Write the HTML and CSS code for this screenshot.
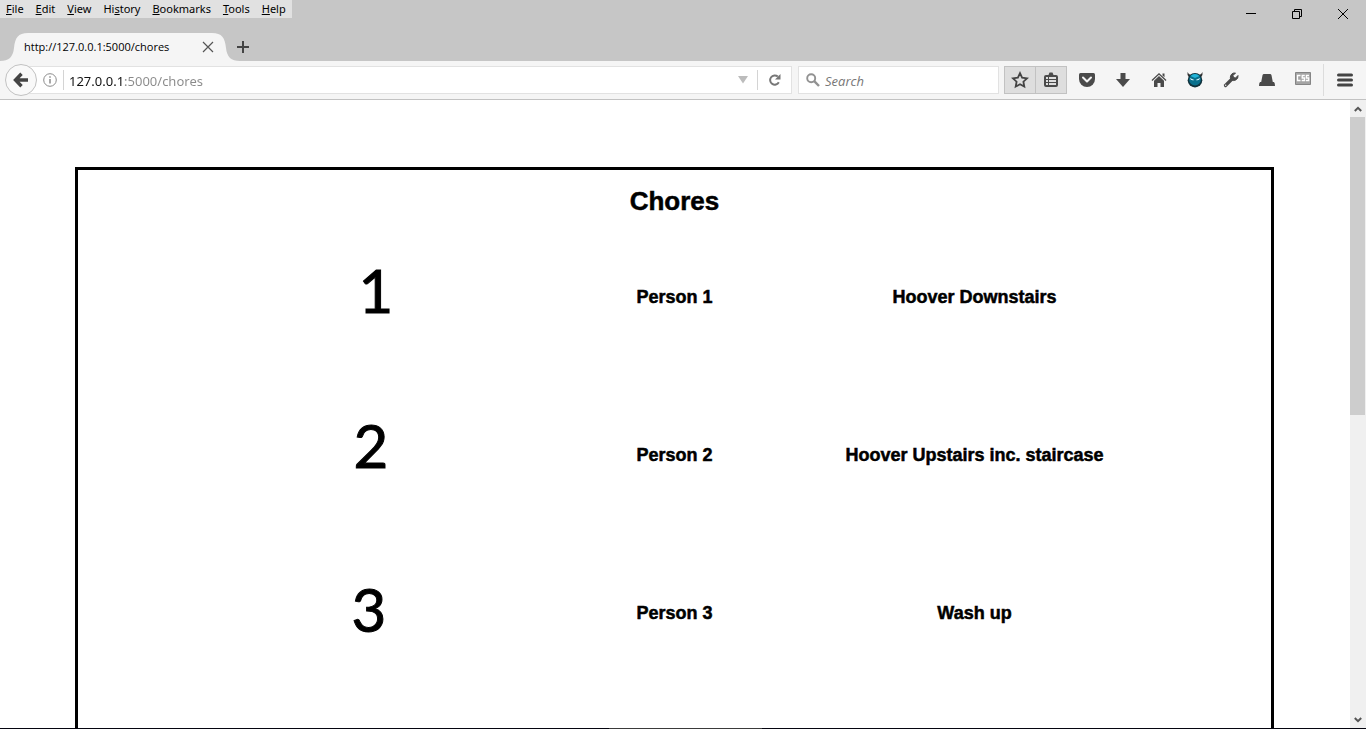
FILE: index.html
```html
<!DOCTYPE html>
<html lang="en">
<head>
<meta charset="utf-8">
<title>Chores</title>
<link rel="stylesheet" href="styles.css">
</head>
<body>
<div class="window">
  <header class="titlebar">
    <div class="top">
      <nav class="menubar" aria-label="Menu">
        <button><u>F</u>ile</button><button><u>E</u>dit</button><button><u>V</u>iew</button><button>Hi<u>s</u>tory</button><button><u>B</u>ookmarks</button><button><u>T</u>ools</button><button><u>H</u>elp</button>
      </nav>
      <div class="controls">
        <button aria-label="Minimize"><svg width="12" height="12" viewBox="0 0 12 12"><path d="M1 5.5h10" class="line"/></svg></button>
        <button aria-label="Restore"><svg width="12" height="12" viewBox="0 0 12 12"><path d="M1.500 3.500h7v7h-7zM3.500 3.500v-2h7v7h-2" class="line"/></svg></button>
        <button aria-label="Close"><svg width="12" height="12" viewBox="0 0 12 12"><path d="M1 1l10 10M11 1L1 11" class="line"/></svg></button>
      </div>
    </div>
    <div class="tabs">
      <div class="tab">
        <svg class="tab-shape" viewBox="0 0 240 28" preserveAspectRatio="none"><path d="M0 28C9 28 13 24 14 15C15 5 18 0 28 0H212C222 0 225 5 226 15C227 24 231 28 240 28Z" fill="#f5f5f5"/></svg>
        <span class="tab-title">http://127.0.0.1:5000/chores</span>
        <button class="tab-close" aria-label="Close tab"><svg width="12" height="12" viewBox="0 0 12 12"><path d="M1 1l10 10M11 1L1 11" stroke="#555" stroke-width="1.2"/></svg></button>
      </div>
      <button class="new-tab" aria-label="New tab"><svg width="12" height="12" viewBox="0 0 12 12"><path d="M6 0v12M0 6h12" stroke="#444" stroke-width="2"/></svg></button>
    </div>
  </header>

  <div class="toolbar">
    <button class="back" aria-label="Back"><svg width="16" height="16" viewBox="0 0 16 16"><path d="M8.500 1.800L2.500 8l6 6.200M3 8h12" fill="none" stroke="#444" stroke-width="3.400"/></svg></button>
    <div class="urlbox">
      <svg width="14" height="14" viewBox="0 0 14 14"><circle cx="7" cy="7" r="6.300" fill="none" stroke="#8c8c8c"/><path d="M7 6v4.500M7 3.200v1.600" stroke="#8c8c8c" stroke-width="1.500"/></svg>
      <span class="rule"></span>
      <input class="url" type="text" aria-label="Address" value="127.0.0.1:5000/chores">
      <button class="drop" aria-label="Show history"><svg width="10" height="8" viewBox="0 0 10 8"><path d="M0 0h10L5 7.500z" fill="#bcbcbc"/></svg></button>
      <span class="rule"></span>
      <button class="reload" aria-label="Reload"><svg width="14" height="14" viewBox="0 0 14 14"><path d="M10.800 9.200A4.600 4.600 0 1 1 9.800 3.600" fill="none" stroke="#777" stroke-width="2"/><path d="M12.500 1v5.500H7z" fill="#777"/></svg></button>
    </div>
    <label class="searchbox">
      <svg width="14" height="14" viewBox="0 0 14 14"><circle cx="5.200" cy="5.200" r="4" fill="none" stroke="#929292" stroke-width="1.900"/><path d="M8.200 8.200l4.800 4.800" stroke="#929292" stroke-width="2.400"/></svg>
      <input type="text" placeholder="Search" aria-label="Search">
    </label>
    <div class="pair">
      <button aria-label="Bookmark this page"><svg width="18" height="18" viewBox="0 0 18 18"><path d="M9 2.200l2.100 4.500 4.900.6-3.600 3.400.9 4.900L9 13.200l-4.300 2.400.9-4.900L2 7.300l4.900-.6z" fill="none" stroke="#444" stroke-width="1.800"/></svg></button>
      <button aria-label="Bookmarks list"><svg width="16" height="16" viewBox="0 0 16 16"><path d="M3 3h2.500l1-2.500h3l1 2.500H13q2 0 2 2v8q0 2-2 2H3q-2 0-2-2V5q0-2 2-2z" fill="#4a4a4a"/><path d="M3 5h2v2H3zM6 5h7v2H6zM3 8h2v2H3zM6 8h7v2H6zM3 11h2v2H3zM6 11h7v2H6z" fill="#dedede"/></svg></button>
    </div>
    <div class="icons">
      <button aria-label="Pocket"><svg width="18" height="18" viewBox="0 0 18 18"><path d="M2.500 2h13q1.500 0 1.500 1.500V8a8 8 0 0 1-16 0V3.500Q1 2 2.500 2z" fill="#4a4a4a"/><path d="M5 6.500l4 4 4-4" fill="none" stroke="#f5f5f5" stroke-width="2" stroke-linecap="round" stroke-linejoin="round"/></svg></button>
      <button aria-label="Downloads"><svg width="16" height="16" viewBox="0 0 16 16"><path d="M5.500 1h5v6H15l-7 8-7-8h4.500z" fill="#4a4a4a"/></svg></button>
      <button aria-label="Home"><svg width="16" height="16" viewBox="0 0 16 16"><path d="M8 1l7.500 7-.9.900L8 2.800 1.400 8.900.5 8z" fill="#4a4a4a"/><path d="M8 4l5 4.700V15H9.500v-4h-3v4H3V8.700zM11.500 1.500h2v3.800l-2-1.800z" fill="#4a4a4a"/></svg></button>
      <button aria-label="Ghost add-on"><svg width="18" height="18" viewBox="0 0 18 18"><path d="M1.500 1Q1 4 2.800 6L5 4Q2.500 3.500 1.500 1zM16.500 1Q17 4 15.200 6L13 4Q15.500 3.500 16.500 1z" fill="#333"/><circle cx="9" cy="9.200" r="7.300" fill="#10313b"/><circle cx="9" cy="8.600" r="5.900" fill="#08708d"/><path d="M4.500 5Q9 .8 13.500 5L9 7z" fill="#22b4d8"/><path d="M3.800 7l4.500 1.900q-3.200 1.500-4.500-1.900zM14.200 7L9.700 8.900q3.200 1.500 4.500-1.900z" fill="#e8fbff"/></svg></button>
      <button aria-label="Developer tools"><svg width="16" height="16" viewBox="0 0 16 16"><path d="M2.500 13.500L9.500 6.500" stroke="#4a4a4a" stroke-width="3.200" stroke-linecap="round"/><path d="M12.500 1L10 3.500l.5 2 2 .5L15 3.500A4.300 4.300 0 0 1 8 7.500 4.300 4.300 0 0 1 12.500 1z" fill="#4a4a4a" stroke="#4a4a4a"/><circle cx="2.700" cy="13.300" r=".7" fill="#f5f5f5"/></svg></button>
      <button aria-label="Hat add-on"><svg width="18" height="14" viewBox="0 0 18 14"><path d="M6 1h6q1.200 0 1.500 1.200L14.800 9H16q1 1 1 4H1q0-3 1-4h1.200l1.300-6.800Q4.800 1 6 1z" fill="#4a4a4a"/></svg></button>
      <button class="css-button" aria-label="CSS toggle"><svg width="16" height="13" viewBox="0 0 16 13"><path d="M.5.5h15v12H.5z" fill="#a4a4a4" stroke="#858585"/><path d="M5.500 3.500h-3v5h3M9.800 3.500H7.200V6h2.300v2.500H6.700M14 3.500h-2.600V6h2.300v2.500h-2.800" fill="none" stroke="#fff" stroke-width="1.300"/></svg></button>
    </div>
    <button class="hamburger" aria-label="Open menu"><svg width="16" height="14" viewBox="0 0 16 14"><path d="M1.500 2h13M1.500 7h13M1.500 12h13" stroke="#444" stroke-width="3" stroke-linecap="round"/></svg></button>
  </div>

  <div class="viewport">
    <main class="page">
      <section class="frame">
        <h1>Chores</h1>
        <ol class="chores">
          <li><svg class="numeral" width="150" height="140" viewBox="0 0 150 140"><text x="76" y="86">1</text></svg><span>Person 1</span><span>Hoover Downstairs</span></li>
          <li><svg class="numeral" width="150" height="140" viewBox="0 0 150 140"><text x="71" y="83">2</text></svg><span>Person 2</span><span>Hoover Upstairs inc. staircase</span></li>
          <li><svg class="numeral" width="150" height="140" viewBox="0 0 150 140"><text x="69" y="89">3</text></svg><span>Person 3</span><span>Wash up</span></li>
        </ol>
      </section>
    </main>
    <div class="scrollbar">
      <svg width="8" height="6" viewBox="0 0 8 6"><path d="M.8 5L4 1.800 7.200 5" class="chevron"/></svg>
      <div class="track"><div class="thumb"></div></div>
      <svg width="8" height="6" viewBox="0 0 8 6"><path d="M.8 1L4 4.200 7.200 1" class="chevron"/></svg>
    </div>
  </div>
  <div class="taskbar-edge"></div>
</div>
</body>
</html>
```

FILE: styles.css
```css
* { box-sizing: border-box; }
body { margin: 0; font-family: "Open Sans", "Noto Sans", sans-serif; color: #000; }
button { border: 0; padding: 0; background: none; font: inherit; color: inherit; display: flex; align-items: center; justify-content: center; }
input { border: 0; padding: 0; min-width: 0; background: none; outline: 0; font: inherit; }
svg { display: block; flex: none; }

.window { height: 100vh; display: flex; flex-direction: column; overflow: hidden; background: #fff; }
.titlebar { background: #c6c6c6; }
.top { display: flex; justify-content: space-between; align-items: flex-start; height: 33px; }
.menubar { display: flex; gap: 12px; padding: 0 6px; height: 18px; background: #e1e1e1; font-family: "Noto Sans", sans-serif; font-size: 11px; line-height: 18px; }
.menubar button { display: block; }
.controls { display: flex; height: 28px; }
.controls button { width: 46px; }
.line { fill: none; stroke: #000; stroke-width: 1; }

.tabs { display: flex; height: 28px; align-items: center; }
.tab { position: relative; width: 240px; height: 28px; display: flex; align-items: center; justify-content: space-between; padding: 0 26px 0 24px; }
.tab-shape { position: absolute; inset: 0; width: 100%; height: 100%; }
.tab-title { position: relative; font-size: 11px; line-height: 16px; white-space: nowrap; }
.tab-close { position: relative; }
.new-tab { margin-left: -3px; }

.toolbar { display: flex; align-items: center; height: 39px; padding: 0 5px; background: #f5f5f5; border-bottom: 1px solid #c2c2c2; }
.back { position: relative; width: 32px; height: 32px; border: 1px solid #c2c2c2; border-radius: 50%; background: #f9f9f9; flex: none; }
.urlbox { flex: 1; display: flex; align-items: center; height: 28px; margin-left: -16px; padding-left: 21px; background: #fff; border: 1px solid #e2e2e2; }
.rule { width: 1px; height: 20px; background: #d4d4d4; flex: none; margin-left: 6px; }
.url { flex: 1; margin-left: 5px; height: 26px; padding-top: 2px; font-family: "Noto Sans", sans-serif; font-size: 13px; color: transparent; background: linear-gradient(90deg, #111 56px, #8a8a8a 56px); background-clip: text; -webkit-background-clip: text; }
.drop { margin-right: 3px; }
.reload { width: 33px; height: 26px; }
.searchbox { display: flex; align-items: center; gap: 5px; width: 201px; height: 28px; margin: 0 5px 0 6px; padding-left: 7px; background: #fff; border: 1px solid #e2e2e2; }
.searchbox input { flex: 1; height: 26px; padding-top: 2px; font-size: 13px; font-style: italic; }
.searchbox input::placeholder { color: #777; opacity: 1; }
.pair { display: flex; width: 63px; height: 28px; border: 1px solid #c2c2c2; background: #dedede; }
.pair button { flex: 1; }
.pair button + button { border-left: 1px solid #c2c2c2; }
.icons { display: flex; align-items: center; height: 32px; padding: 0 2px; border-right: 1px solid #dcdcdc; }
.icons button { width: 36px; height: 28px; }
.icons .css-button { align-items: flex-start; padding-top: 6px; }
.hamburger { width: 32px; height: 28px; margin-left: 5px; }

.viewport { flex: 1; min-height: 0; display: flex; }
.page { flex: 1; display: flex; padding: 67px 76px 0 75px; overflow: hidden; }
.frame { flex: 1; border: 3px solid #000; border-bottom: 0; padding-top: 15px; font-family: "Liberation Sans", Arial, sans-serif; font-weight: 700; -webkit-text-stroke: 0.5px #000; }
h1 { margin: 0 0 1px; font-size: 26px; line-height: 32px; text-align: center; }
.chores { list-style: none; width: 900px; max-width: 100%; margin: 0 auto; padding: 0; }
.chores li { display: grid; grid-template-columns: repeat(3, 1fr); align-items: center; justify-items: center; height: 158px; font-size: 18px; line-height: 24px; }
.numeral text { font-family: Lato, sans-serif; font-weight: 400; font-size: 60px; text-anchor: middle; stroke: #000; stroke-width: 1px; }

.scrollbar { width: 16px; display: flex; flex-direction: column; align-items: center; gap: 5px; padding: 6px 0 5px; background: #f0f0f0; }
.chevron { fill: none; stroke: #555; stroke-width: 2; }
.track { flex: 1; width: 100%; }
.thumb { width: 15px; height: 50%; background: #cdcdcd; }
.taskbar-edge { height: 1px; background: linear-gradient(90deg, #05050f 609px, #3a3a3a 609px 762px, #05050f 762px); }
```
